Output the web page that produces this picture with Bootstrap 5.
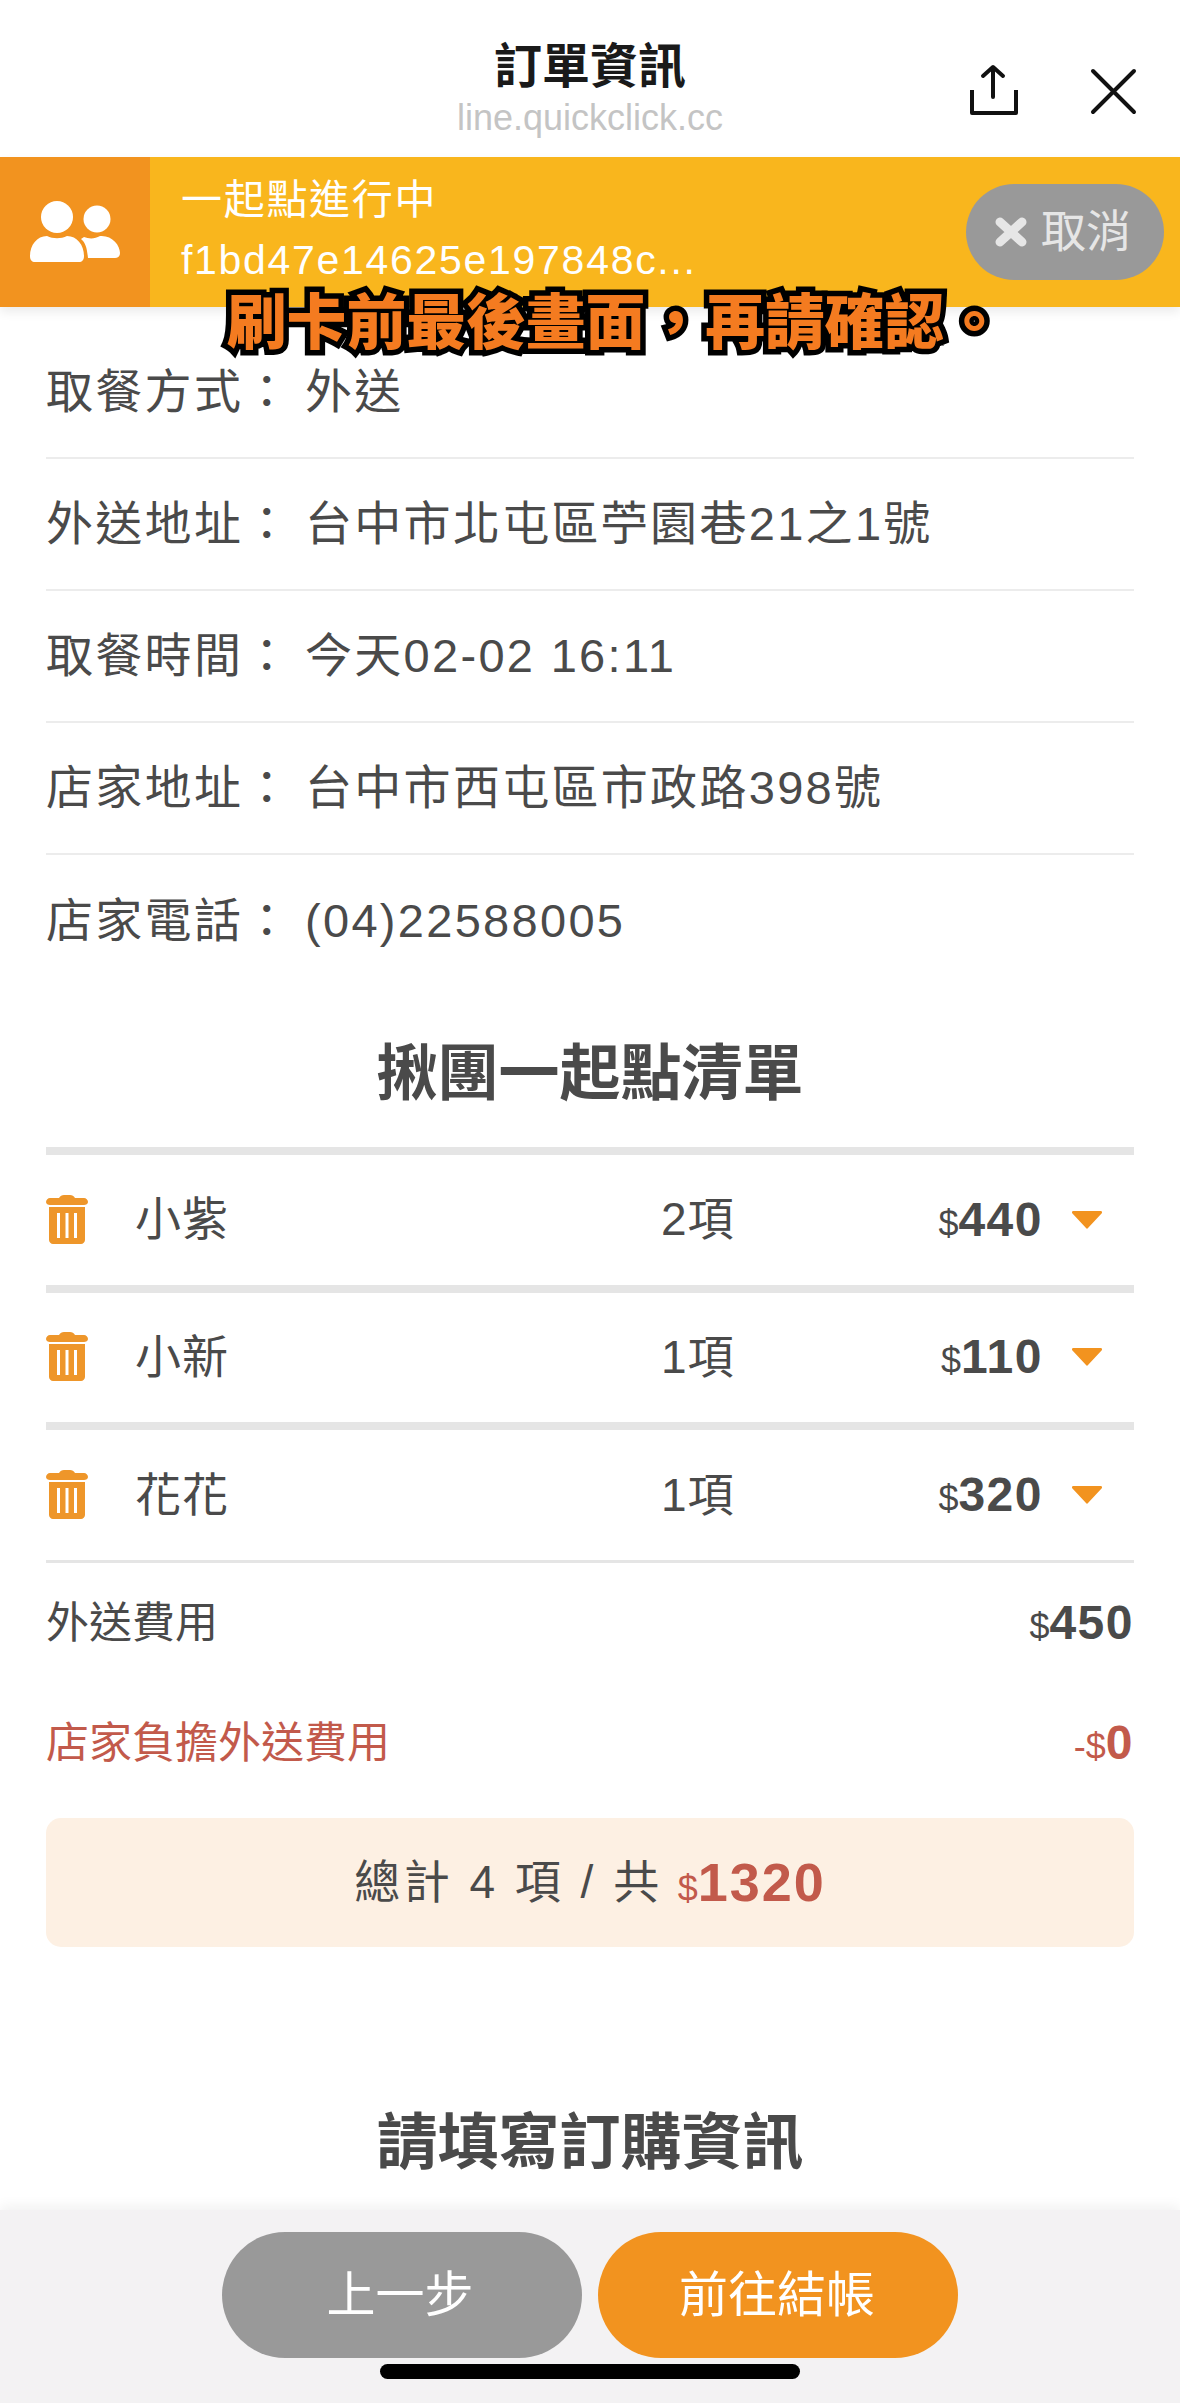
<!DOCTYPE html>
<html lang="zh-Hant">
<head>
<meta charset="utf-8">
<title>訂單資訊</title>
<link href="https://cdn.jsdelivr.net/npm/bootstrap@5.3.0/dist/css/bootstrap.min.css" rel="stylesheet">
<style>
html,body{margin:0;height:2403px;overflow:hidden;background:#fff}
body{font-family:"Liberation Sans","Noto Sans CJK TC",sans-serif;color:#4a4a4a}
.page-wrap{width:1180px;height:2403px;position:relative;overflow:hidden}
.top-head{height:157px;position:relative}
.top-title{font-size:48px;font-weight:700;line-height:56px;color:#1a1a1a;padding-top:39px}
.top-sub{font-size:36px;line-height:40px;color:#c4c4c4;padding-top:3px}
.head-icon{position:absolute}
.ic-share{left:966px;top:62px;width:54px;height:56px}
.ic-close{left:1088px;top:66px;width:50px;height:50px}
.banner{height:150px;background:#f9b61d;box-shadow:0 5px 10px rgba(0,0,0,.08);position:relative}
.banner-ic{width:150px;background:#f2931f}
.banner-txt{padding-left:31px;color:#fff;font-size:41px;line-height:60px;letter-spacing:1.7px;padding-top:13px;width:700px}
.cancel-pill{position:absolute;left:966px;top:27px;width:198px;height:96px;background:#999;color:#e6e6e6;border:0;font-size:45px;line-height:1;padding:0 4px 0 0}
.cancel-pill:hover,.cancel-pill:active{background:#999;color:#e6e6e6}
.cancel-pill span{margin-left:-2px}
.caption{position:absolute;left:0;right:0;top:286px;text-align:center;font-size:59.800px;line-height:76px;font-weight:900;color:#f47b20;-webkit-text-stroke:11px #000;paint-order:stroke fill;text-shadow:0 3px 3px rgba(0,0,0,.45);padding-left:51px;white-space:nowrap}
.info-list{padding:20px 46px 0}
.info-row{height:132px;font-size:47px;letter-spacing:2.3px;color:#4a4a4a;border-bottom:2px solid #ececec}
.info-row:last-child{border-bottom:0}
.info-lab{width:259px}
.sec-head{font-size:61px;font-weight:700;line-height:80px;color:#4a4a4a;text-align:center;margin:0}
.sec-a{padding:47px 0 33px}
.sec-b{padding:156px 0 27px}
.group-list{margin:0 46px}
.group-row{height:137.5px;border-top:8px solid #e5e5e5;font-size:46px;letter-spacing:1px}
.group-row.tail{height:141px;border-bottom:3px solid #e5e5e5}
.trash{width:42px;height:50px;flex:none}
.g-name{width:573px;padding-left:47px;flex:none}
.g-count{width:200px;flex:none}
.g-price{width:182px;text-align:right;flex:none}
.cur{font-size:36px;font-weight:400;letter-spacing:0}
.amt{font-weight:700;font-size:48px;letter-spacing:1.5px}
.caret-s{width:30px;height:18px;margin-left:29px;flex:none}
.fee-row{height:120px;font-size:43px;margin:0 46px}
.fee-red{color:#c25a4b}
.total-box{height:129px;margin:15px 46px 0;background:#fdf0e3;border-radius:15px;font-size:46px;letter-spacing:3.500px}
.total-box .cur{margin-left:15px}
.total-red{color:#c25a4b}
.total-red .amt{font-size:54px;letter-spacing:2px}
.foot{position:absolute;left:0;right:0;top:2210px;height:193px;background:#f3f2f3;box-shadow:0 -4px 12px rgba(0,0,0,.06);padding-top:22px}
.foot-btn{width:360px;height:126px;font-size:49px;color:#fff;border:0;line-height:1;letter-spacing:0;padding-right:14px}
.foot-btn.grey,.foot-btn.grey:hover{background:#999;color:#fff;padding-right:16px}
.foot-btn.amber,.foot-btn.amber:hover{background:#f2931f;color:#fff;padding-right:14px}
.home-bar{width:420px;height:15px;background:#000;border-radius:8px;margin:6px auto 0}
</style>
</head>
<body>
<div class="page-wrap">
  <header class="top-head text-center">
    <div class="top-title">訂單資訊</div>
    <div class="top-sub">line.quickclick.cc</div>
    <svg class="head-icon ic-share" viewBox="0 0 54 56" fill="none" stroke="#111" stroke-width="4" stroke-linecap="round" stroke-linejoin="round"><path d="M27 6V35M17 14 27 5 37 14"/><path d="M6 28V51H50V28" stroke-linecap="butt"/></svg>
    <svg class="head-icon ic-close" viewBox="0 0 50 50" fill="none" stroke="#111" stroke-width="4" stroke-linecap="round"><path d="M5 5 46 46M46 5 5 46"/></svg>
  </header>
  <section class="banner d-flex">
    <div class="banner-ic d-flex align-items-center justify-content-center">
      <svg width="92" height="66" viewBox="0 0 92 66" fill="#fff"><circle cx="28" cy="18" r="16"/><circle cx="68" cy="20" r="13.500"/><path d="M1 57C1 46 8 37 18 37 24 40 32 40 38 37 48 37 55 46 55 57 55 61 53 63 50 63H6C3 63 1 61 1 57Z"/><path d="M55 38C60 40 66 40 71 37 83 36 91 46 91 54 91 57 89 59 86 59H59C58 50 57 44 52 40Z"/></svg>
    </div>
    <div class="banner-txt">
      <div>一起點進行中</div>
      <div>f1bd47e14625e197848c...</div>
    </div>
    <button type="button" class="btn cancel-pill rounded-pill d-flex align-items-center justify-content-center gap-3">
      <svg width="32" height="30" viewBox="0 0 32 30" fill="none" stroke="#e6e6e6" stroke-width="9" stroke-linecap="round"><path d="M5 5 27 25M27 5 5 25"/></svg>
      <span>取消</span>
    </button>
  </section>
  <div class="caption">刷卡前最後畫面，再請確認。</div>
  <section class="info-list">
    <div class="info-row d-flex align-items-center"><span class="info-lab">取餐方式：</span><span>外送</span></div>
    <div class="info-row d-flex align-items-center"><span class="info-lab">外送地址：</span><span>台中市北屯區苧園巷21之1號</span></div>
    <div class="info-row d-flex align-items-center"><span class="info-lab">取餐時間：</span><span>今天02-02 16:11</span></div>
    <div class="info-row d-flex align-items-center"><span class="info-lab">店家地址：</span><span>台中市西屯區市政路398號</span></div>
    <div class="info-row d-flex align-items-center"><span class="info-lab">店家電話：</span><span>(04)22588005</span></div>
  </section>
  <h2 class="sec-head sec-a">揪團一起點清單</h2>
  <section class="group-list">
    <div class="group-row d-flex align-items-center">
      <svg class="trash" viewBox="0 0 42 50" fill="#ee962a"><path d="M13 3C14 1 16 0 18 0H24C26 0 28 1 29 3H38C40 3 42 5 42 7 42 9 40 10 38 10H4C2 10 0 9 0 7 0 5 2 3 4 3Z"/><path fill-rule="evenodd" d="M3 12H39V45C39 47 37 49 35 49H7C5 49 3 47 3 45ZM11 18V43H14V18ZM19.500 18V43H22.500V18ZM28 18V43H31V18Z"/></svg>
      <span class="g-name">小紫</span><span class="g-count">2項</span>
      <span class="g-price"><span class="cur">$</span><span class="amt">440</span></span>
      <svg class="caret-s" viewBox="0 0 30 18" fill="#f2931f"><path d="M1 0H29C30 0 30 1 30 2L16 17C15.500 18 14.500 18 14 17L0 2C0 1 0 0 1 0Z"/></svg>
    </div>
    <div class="group-row d-flex align-items-center">
      <svg class="trash" viewBox="0 0 42 50" fill="#ee962a"><path d="M13 3C14 1 16 0 18 0H24C26 0 28 1 29 3H38C40 3 42 5 42 7 42 9 40 10 38 10H4C2 10 0 9 0 7 0 5 2 3 4 3Z"/><path fill-rule="evenodd" d="M3 12H39V45C39 47 37 49 35 49H7C5 49 3 47 3 45ZM11 18V43H14V18ZM19.500 18V43H22.500V18ZM28 18V43H31V18Z"/></svg>
      <span class="g-name">小新</span><span class="g-count">1項</span>
      <span class="g-price"><span class="cur">$</span><span class="amt">110</span></span>
      <svg class="caret-s" viewBox="0 0 30 18" fill="#f2931f"><path d="M1 0H29C30 0 30 1 30 2L16 17C15.500 18 14.500 18 14 17L0 2C0 1 0 0 1 0Z"/></svg>
    </div>
    <div class="group-row tail d-flex align-items-center">
      <svg class="trash" viewBox="0 0 42 50" fill="#ee962a"><path d="M13 3C14 1 16 0 18 0H24C26 0 28 1 29 3H38C40 3 42 5 42 7 42 9 40 10 38 10H4C2 10 0 9 0 7 0 5 2 3 4 3Z"/><path fill-rule="evenodd" d="M3 12H39V45C39 47 37 49 35 49H7C5 49 3 47 3 45ZM11 18V43H14V18ZM19.500 18V43H22.500V18ZM28 18V43H31V18Z"/></svg>
      <span class="g-name">花花</span><span class="g-count">1項</span>
      <span class="g-price"><span class="cur">$</span><span class="amt">320</span></span>
      <svg class="caret-s" viewBox="0 0 30 18" fill="#f2931f"><path d="M1 0H29C30 0 30 1 30 2L16 17C15.500 18 14.500 18 14 17L0 2C0 1 0 0 1 0Z"/></svg>
    </div>
  </section>
  <div class="fee-row d-flex align-items-center justify-content-between"><span>外送費用</span><span><span class="cur">$</span><span class="amt">450</span></span></div>
  <div class="fee-row fee-red d-flex align-items-center justify-content-between"><span>店家負擔外送費用</span><span><span class="cur">-$</span><span class="amt">0</span></span></div>
  <div class="total-box d-flex align-items-center justify-content-center"><span>總計 4 項 / 共</span><span class="total-red"><span class="cur">$</span><span class="amt">1320</span></span></div>
  <h2 class="sec-head sec-b">請填寫訂購資訊</h2>
  <footer class="foot">
    <div class="d-flex justify-content-center gap-3">
      <button type="button" class="btn foot-btn grey rounded-pill">上一步</button>
      <button type="button" class="btn foot-btn amber rounded-pill">前往結帳</button>
    </div>
    <div class="home-bar"></div>
  </footer>
</div>
<script src="https://cdn.jsdelivr.net/npm/bootstrap@5.3.0/dist/js/bootstrap.bundle.min.js"></script>
</body>
</html>
